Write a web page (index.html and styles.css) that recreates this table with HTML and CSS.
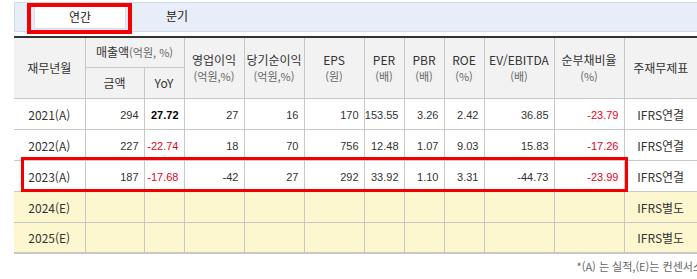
FILE: index.html
```html
<!DOCTYPE html>
<html lang="ko">
<head>
<meta charset="utf-8">
<link rel="stylesheet" href="styles.css">
</head>
<body>
<div class="wrap">
  <div class="tabbar">
    <div class="tab tab-on">연간</div>
    <div class="tab">분기</div>
    <div class="mark mark-tab"></div>
  </div>
  <div class="tablebox">
    <table class="fin">
      <colgroup>
        <col class="c-year"><col class="c-amt"><col class="c-yoy"><col class="c-60"><col class="c-60"><col class="c-60">
        <col class="c-40"><col class="c-40"><col class="c-40"><col class="c-70"><col class="c-70"><col class="c-last">
      </colgroup>
      <thead>
        <tr class="h1">
          <th rowspan="2">재무년월</th>
          <th colspan="2">매출액<small>(억원, %)</small></th>
          <th rowspan="2">영업이익<br><small>(억원,%)</small></th>
          <th rowspan="2">당기순이익<br><small>(억원,%)</small></th>
          <th rowspan="2">EPS<br><small>(원)</small></th>
          <th rowspan="2">PER<br><small>(배)</small></th>
          <th rowspan="2">PBR<br><small>(배)</small></th>
          <th rowspan="2">ROE<br><small>(%)</small></th>
          <th rowspan="2">EV/EBITDA<br><small>(배)</small></th>
          <th rowspan="2">순부채비율<br><small>(%)</small></th>
          <th rowspan="2">주재무제표</th>
        </tr>
        <tr class="h2">
          <th>금액</th>
          <th>YoY</th>
        </tr>
      </thead>
      <tbody>
        <tr>
          <td class="yr">2021(A)</td><td>294</td><td class="strong">27.72</td><td>27</td><td>16</td><td>170</td>
          <td>153.55</td><td>3.26</td><td>2.42</td><td>36.85</td><td class="neg">-23.79</td><td class="std">IFRS연결</td>
        </tr>
        <tr>
          <td class="yr">2022(A)</td><td>227</td><td class="neg">-22.74</td><td>18</td><td>70</td><td>756</td>
          <td>12.48</td><td>1.07</td><td>9.03</td><td>15.83</td><td class="neg">-17.26</td><td class="std">IFRS연결</td>
        </tr>
        <tr>
          <td class="yr">2023(A)</td><td>187</td><td class="neg">-17.68</td><td>-42</td><td>27</td><td>292</td>
          <td>33.92</td><td>1.10</td><td>3.31</td><td>-44.73</td><td class="neg">-23.99</td><td class="std">IFRS연결</td>
        </tr>
        <tr class="est">
          <td class="yr">2024(E)</td><td></td><td></td><td></td><td></td><td></td>
          <td></td><td></td><td></td><td></td><td></td><td class="std">IFRS별도</td>
        </tr>
        <tr class="est">
          <td class="yr">2025(E)</td><td></td><td></td><td></td><td></td><td></td>
          <td></td><td></td><td></td><td></td><td></td><td class="std">IFRS별도</td>
        </tr>
      </tbody>
    </table>
    <div class="mark mark-row"></div>
  </div>
  <p class="note">*(A) 는 실적,(E)는 컨센서스</p>
</div>
</body>
</html>
```
FILE: styles.css
```css
html, body {
  margin: 0;
  padding: 0;
  background: #fff;
  overflow: hidden;
}
body {
  font-family: "Noto Sans CJK KR", "Liberation Sans", sans-serif;
  color: #333;
  font-size: 12px;
}
.wrap {
  margin: 2px 0 0 14px;
  width: 683px;
}
.tabbar {
  position: relative;
  height: 28px;
  background: #e8eef8;
  border: 1px solid #cfd9ea;
  border-right: none;
  display: flex;
  gap: 5px;
  padding-left: 19px;
  align-items: flex-end;
  box-sizing: content-box;
}
.tab {
  width: 92px;
  height: 24px;
  line-height: 22px;
  text-align: center;
  font-size: 12px;
  color: #222;
  box-sizing: border-box;
  margin-bottom: 2px;
}
.tab-on {
  background: #fff;
  border: 1px solid #d8dde6;
}
.mark {
  position: absolute;
  border: 4px solid #f40000;
  box-sizing: border-box;
}
.mark-tab {
  left: 12px;
  top: 0;
  width: 105px;
  height: 31px;
}
.tablebox {
  position: relative;
  margin-top: 4px;
}
.fin {
  width: 683px;
  table-layout: fixed;
  border-collapse: collapse;
  border-top: 2px solid #333;
  border-bottom: 2px solid #c8c8c8;
}
.c-year { width: 71px; }
.c-amt { width: 59px; }
.c-yoy { width: 40px; }
.c-60 { width: 60px; }
.c-40 { width: 40px; }
.c-70 { width: 70px; }
.c-last { width: 73px; }
.fin th, .fin td {
  border: 1px solid #c8c8c8;
  padding: 0;
  overflow: hidden;
  white-space: nowrap;
}
.fin th:first-child, .fin td:first-child { border-left: none; }
.fin tr > :last-child { border-right: none; }
.fin .h2 th:last-child { border-right: 1px solid #c8c8c8; }
.fin th {
  background: #f2f2f2;
  font-weight: normal;
  color: #333;
  font-size: 12px;
  line-height: 16px;
}
.fin th small {
  font-size: 11px;
  color: #666;
}
.h1 { height: 30px; }
.h2 { height: 31px; }
.fin tbody tr { height: 31px; }
.fin td {
  text-align: right;
  padding-right: 5px;
  font-family: "Liberation Sans", "Noto Sans CJK KR", sans-serif;
  font-size: 11px;
  color: #333;
  padding-top: 3px;
}
.fin td.yr, .fin td.std {
  text-align: center;
  padding-right: 0;
  font-family: "Noto Sans CJK KR", "Liberation Sans", sans-serif;
  font-size: 12px;
  padding-top: 1px;
}
.fin td.strong { color: #000; font-weight: bold; }
.fin td.neg { color: #e8001c; }
.fin .est td { background: #fdf7d0; }
.mark-row {
  left: 7px;
  top: 121px;
  width: 607px;
  height: 35px;
  border-width: 3px;
}
.note {
  margin: 4px -6px 0 0;
  text-align: right;
  font-size: 11px;
  color: #666;
  white-space: nowrap;
}
```
